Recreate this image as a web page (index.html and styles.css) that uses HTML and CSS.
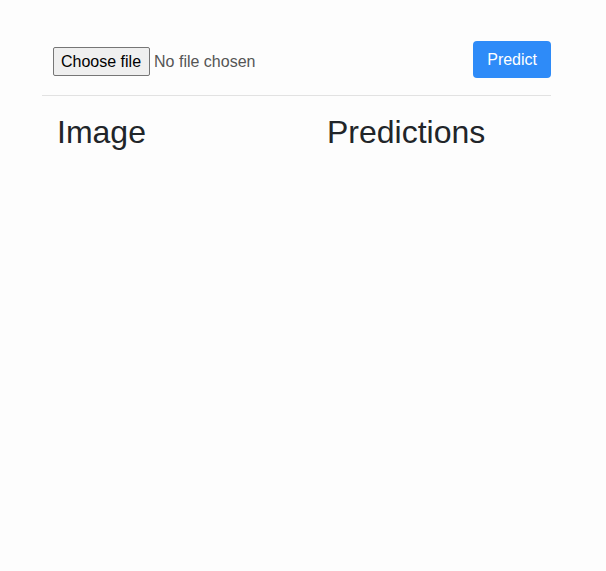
FILE: index.html
```html
<!DOCTYPE html>
<html lang="en">
<head>
    <meta charset="UTF-8">
    <meta name="viewport" content="width=device-width, initial-scale=1.0">
    <title>Image Classifier</title>
    <link rel="stylesheet" href="styles.css">
</head>
<body>
    <div class="container">
        <form class="upload-form">
            <div class="file-picker">
                <input type="file" id="image-file" name="image-file" class="file-input">
                <label for="image-file" class="file-button">Choose file</label>
                <span class="file-name">No file chosen</span>
            </div>
            <button type="button" class="btn-predict">Predict</button>
        </form>
        <hr class="divider">
        <div class="results">
            <div class="col-image">
                <h2>Image</h2>
            </div>
            <div class="col-predictions">
                <h2>Predictions</h2>
            </div>
        </div>
    </div>
</body>
</html>
```

FILE: styles.css
```css
body, h2, hr {
    margin: 0;
    padding: 0;
}

body {
    font-family: "Liberation Sans", Arial, sans-serif;
    background-color: #fdfdfd;
    color: #212529;
}

.container {
    width: 509px;
    margin-left: 42px;
    padding-top: 41px;
}

.upload-form {
    display: flex;
    justify-content: space-between;
    align-items: center;
    padding-left: 11px;
}

.file-picker {
    display: flex;
    align-items: center;
    gap: 4px;
    padding-top: 4px;
    font-size: 16px;
}

.file-input {
    display: none;
}

.file-button {
    display: block;
    color: #000;
    background-color: #efefef;
    border: 1px solid #767676;
    border-radius: 2px;
    padding: 0 8px 0 7px;
    line-height: 27px;
}

.file-name {
    color: #555;
}

.btn-predict {
    background-color: #2e8bf8;
    color: white;
    font-family: "Liberation Sans", Arial, sans-serif;
    font-size: 16px;
    line-height: 25px;
    padding: 6px 14px;
    border: none;
    border-radius: 4px;
    cursor: pointer;
}

.divider {
    border: none;
    border-top: 1px solid #e2e2e2;
    margin-top: 17px;
}

.results {
    display: flex;
    padding-top: 17px;
}

.results h2 {
    font-size: 32px;
    font-weight: 500;
    line-height: 1.2;
}

.col-image {
    width: 270px;
    padding-left: 15px;
}
```
